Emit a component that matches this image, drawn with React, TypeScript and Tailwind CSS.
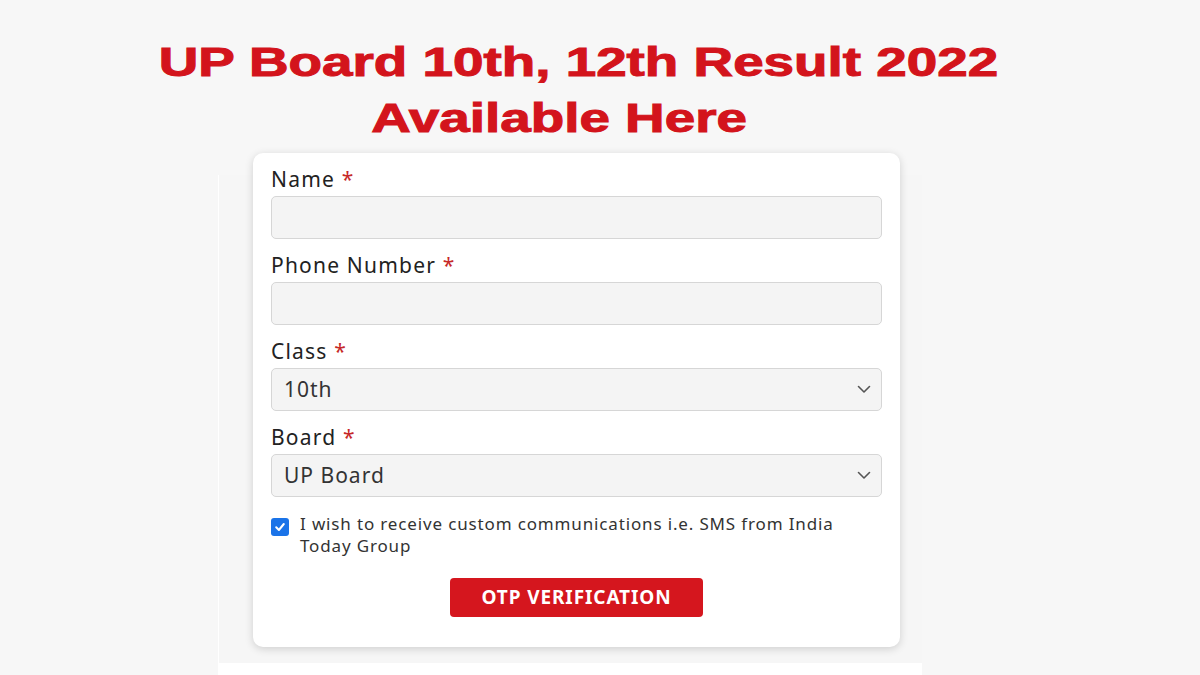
import React from "react";

const Chevron = () => (
  <svg width="14" height="9" viewBox="0 0 14 9" className="shrink-0">
    <polyline points="1.5,1.5 7,7 12.5,1.5" fill="none" stroke="#555" strokeWidth="1.6" strokeLinecap="round" strokeLinejoin="round" />
  </svg>
);

const Label = ({ text }: { text: string }) => (
  <div className="h-[28px] leading-[28px] text-[21px] tracking-[1.2px] text-[#222]">
    {text} <span className="text-[#c62828]">*</span>
  </div>
);

const Field = ({ label, value, select }: { label: string; value?: string; select?: boolean }) => (
  <div className="mb-[12px]">
    <Label text={label} />
    <div className="mt-[3px] h-[43px] rounded-[5px] border border-[#d6d6d6] bg-[#f4f4f4] flex items-center justify-between pl-[12px] pr-[10px]">
      <span className="text-[21px] tracking-[1px] text-[#333]">{value ?? ""}</span>
      {select ? <Chevron /> : null}
    </div>
  </div>
);

export default function App() {
  return (
    <div className="w-[1200px] h-[675px] overflow-hidden bg-[#f7f7f7]" style={{ fontFamily: '"Noto Sans", "Open Sans", sans-serif' }}>
      <div className="pt-[34px] text-[#d3141c] font-bold text-[40px] leading-[56px]" style={{ fontFamily: '"Liberation Sans", Arial, sans-serif' }}>
        <div className="w-[1156px] flex justify-center">
          <span className="inline-block scale-x-[1.37] whitespace-nowrap [-webkit-text-stroke:1px_#d3141c]">UP Board 10th, 12th Result 2022</span>
        </div>
        <div className="w-[1118px] flex justify-center">
          <span className="inline-block scale-x-[1.37] whitespace-nowrap [-webkit-text-stroke:1px_#d3141c]">Available Here</span>
        </div>
      </div>

      <div className="mt-[29px] ml-[218px] w-[704px] h-[488px] bg-[#f6f6f6] border-l border-white flex flex-col">
        <div className="-mt-[22px] ml-[34px] w-[647px] h-[494px] shrink-0 bg-white rounded-[10px] shadow-[0_2px_8px_rgba(0,0,0,0.16)] pt-[12px] px-[18px]">
          <Field label="Name" />
          <Field label="Phone Number" />
          <Field label="Class" value="10th" select />
          <Field label="Board" value="UP Board" select />
          <div className="mt-[16px] flex items-start gap-[11px]">
            <div className="mt-[5px] w-[18px] h-[18px] rounded-[3px] bg-[#1a73e8] flex items-center justify-center shrink-0">
              <svg width="12" height="12" viewBox="0 0 12 12">
                <polyline points="2.2,6.3 4.9,9 9.8,3" fill="none" stroke="white" strokeWidth="2" strokeLinecap="round" strokeLinejoin="round" />
              </svg>
            </div>
            <div className="text-[17px] leading-[22px] tracking-[0.85px] text-[#333] w-[560px]">
              I wish to receive custom communications i.e. SMS from India Today Group
            </div>
          </div>
          <div className="mt-[21px] flex justify-center">
            <div className="w-[253px] h-[39px] rounded-[4px] bg-[#d5161e] flex items-center justify-center text-white font-bold text-[19px] tracking-[0.9px]">
              OTP VERIFICATION
            </div>
          </div>
        </div>
      </div>
      <div className="ml-[218px] w-[704px] h-[12px] bg-white" />
    </div>
  );
}
